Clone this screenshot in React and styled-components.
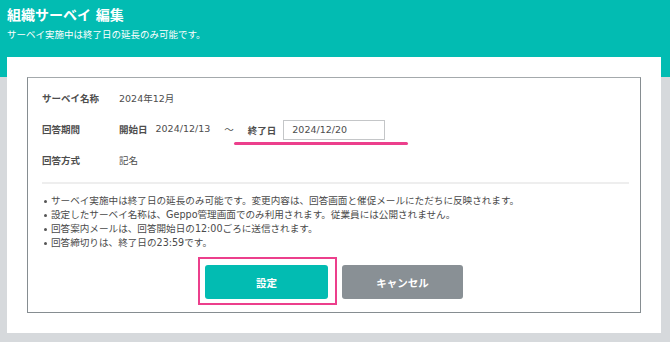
import { createGlobalStyle, styled } from "styled-components";

const GlobalStyle = createGlobalStyle`
  html, body {
    margin: 0;
    padding: 0;
  }
  body {
    background: #d6d9dc;
    font-family: "DejaVu Sans", "Noto Sans CJK JP", sans-serif;
    color: #555;
  }
`;

const TEAL = "#02bcb2";

const Header = styled.header`
  background: ${TEAL};
  height: 57px;
  box-sizing: border-box;
  padding: 6px 7px 0;
  display: flex;
  flex-direction: column;
  gap: 4px;
`;

const Title = styled.h1`
  margin: 0;
  font-size: 14px;
  line-height: 18px;
  font-weight: 700;
  color: #fff;
`;

const Subtitle = styled.p`
  margin: 0;
  font-size: 9.5px;
  line-height: 14px;
  color: #fff;
`;

const Stage = styled.div`
  background: linear-gradient(${TEAL} 20px, transparent 20px);
  padding: 0 9px 0 7px;
`;

const Card = styled.main`
  background: #fff;
  padding: 20px;
`;

const Box = styled.section`
  border: 1px solid #868d91;
  border-top-color: #a4a9ac;
  padding: 4px 11px 13px 14px;
`;

const Row = styled.div`
  display: flex;
  align-items: center;
  height: 31px;
  font-size: 9.5px;
`;

const Label = styled.span`
  width: 77px;
  font-weight: 700;
  color: #4d4d4d;
`;

const Value = styled.span`
  color: #4d4d4d;
  margin-right: ${(p) => p.$gap || 0}px;
`;

const SubLabel = styled.span`
  font-weight: 700;
  color: #4d4d4d;
  margin-right: ${(p) => p.$gap || 0}px;
`;

const Tilde = styled.span`
  color: #4d4d4d;
`;

const Marked = styled.span`
  position: relative;
  align-self: stretch;
  display: flex;
  align-items: center;
  padding: 2px 23px 0 14px;

  &::after {
    content: "";
    position: absolute;
    left: 0;
    right: 0;
    bottom: -1px;
    height: 3px;
    border-radius: 2px;
    background: #ec3f8c;
  }
`;

const DateInput = styled.input`
  box-sizing: border-box;
  width: 102px;
  height: 20px;
  border: 1px solid #c4c6c8;
  padding: 0 0 0 8px;
  font-family: inherit;
  font-size: 9.5px;
  color: #4d4d4d;
  outline: none;
`;

const Divider = styled.hr`
  border: none;
  border-top: 2px solid #eeeeee;
  margin: 7px 0 0;
`;

const Notes = styled.ul`
  list-style: none;
  margin: 10px 0 0;
  padding: 0;
`;

const Note = styled.li`
  position: relative;
  padding-left: 9px;
  font-size: 9.6px;
  line-height: 14px;
  color: #4a4a4a;
  white-space: nowrap;

  &::before {
    content: "";
    position: absolute;
    left: 2px;
    top: 6px;
    width: 3px;
    height: 3px;
    border-radius: 50%;
    background: #555;
  }
`;

const Actions = styled.div`
  display: flex;
  justify-content: center;
  gap: 14px;
  margin-top: 15px;
  padding-right: 3px;
`;

const Highlight = styled.span`
  position: relative;
  display: inline-flex;

  &::after {
    content: "";
    position: absolute;
    left: -7px;
    right: -9px;
    top: -8px;
    bottom: -6px;
    border: 2px solid #ec3f8c;
    pointer-events: none;
  }
`;

const Button = styled.button`
  width: ${(p) => p.$w}px;
  height: 34px;
  border: none;
  border-radius: 3px;
  background: ${(p) => (p.$variant === "cancel" ? "#899095" : TEAL)};
  color: #fff;
  font-family: inherit;
  font-size: 10.5px;
  font-weight: 700;
  cursor: pointer;
`;

export default function App() {
  return (
    <>
      <GlobalStyle />
      <Header>
        <Title>組織サーベイ 編集</Title>
        <Subtitle>サーベイ実施中は終了日の延長のみ可能です。</Subtitle>
      </Header>
      <Stage>
        <Card>
          <Box>
            <Row>
              <Label>サーベイ名称</Label>
              <Value>2024年12月</Value>
            </Row>
            <Row>
              <Label>回答期間</Label>
              <SubLabel $gap={8}>開始日</SubLabel>
              <Value $gap={14}>2024/12/13</Value>
              <Tilde>～</Tilde>
              <Marked>
                <SubLabel $gap={7}>終了日</SubLabel>
                <DateInput defaultValue="2024/12/20" />
              </Marked>
            </Row>
            <Row>
              <Label>回答方式</Label>
              <Value>記名</Value>
            </Row>
            <Divider />
            <Notes>
              <Note>サーベイ実施中は終了日の延長のみ可能です。変更内容は、回答画面と催促メールにただちに反映されます。</Note>
              <Note>設定したサーベイ名称は、Geppo管理画面でのみ利用されます。従業員には公開されません。</Note>
              <Note>回答案内メールは、回答開始日の12:00ごろに送信されます。</Note>
              <Note>回答締切りは、終了日の23:59です。</Note>
            </Notes>
            <Actions>
              <Highlight>
                <Button $w={123}>設定</Button>
              </Highlight>
              <Button $w={121} $variant="cancel">
                キャンセル
              </Button>
            </Actions>
          </Box>
        </Card>
      </Stage>
    </>
  );
}
